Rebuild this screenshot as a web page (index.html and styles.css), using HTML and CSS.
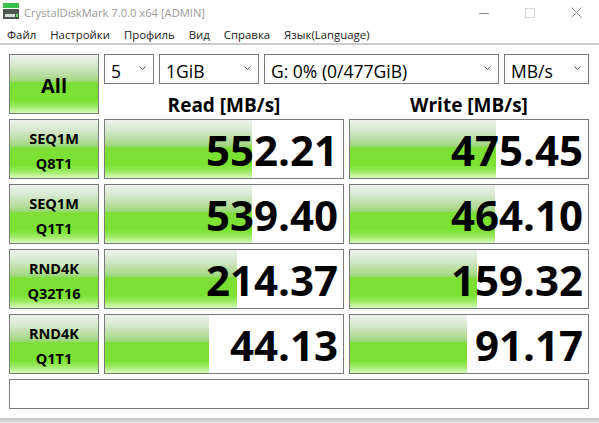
FILE: index.html
```html
<!DOCTYPE html>
<html lang="ru">
<head>
<meta charset="utf-8">
<title>CrystalDiskMark 7.0.0 x64 [ADMIN]</title>
<link rel="stylesheet" href="styles.css">
</head>
<body>
<div class="window">
  <div class="titlebar">
    <svg class="app-icon" width="17" height="17" viewBox="0 0 17 17">
      <rect x="0" y="0" width="16" height="5" fill="#38c24a"/>
      <rect x="0" y="6" width="16" height="10" fill="#4e5650"/>
      <rect x="2" y="11" width="10" height="3" fill="#d9dcd9"/>
      <rect x="13" y="11" width="2" height="3" fill="#6bd46f"/>
    </svg>
    <span class="title">CrystalDiskMark 7.0.0 x64 [ADMIN]</span>
    <div class="controls">
      <span class="ctl"><svg width="10" height="10" viewBox="0 0 10 10"><line x1="0" y1="5.5" x2="10" y2="5.5" stroke="#8a8a8a" stroke-width="1"/></svg></span>
      <span class="ctl"><svg width="10" height="10" viewBox="0 0 10 10"><rect x="0.5" y="0.5" width="9" height="9" fill="none" stroke="#d6d6d6" stroke-width="1"/></svg></span>
      <span class="ctl"><svg width="11" height="11" viewBox="0 0 11 11"><path d="M0.5 0.5 L10.5 10.5 M10.5 0.5 L0.5 10.5" stroke="#8a8a8a" stroke-width="1"/></svg></span>
    </div>
  </div>
  <nav class="menubar">
    <span class="menu-item">Файл</span>
    <span class="menu-item">Настройки</span>
    <span class="menu-item">Профиль</span>
    <span class="menu-item">Вид</span>
    <span class="menu-item">Справка</span>
    <span class="menu-item">Язык(Language)</span>
  </nav>
  <main class="board">
    <div class="btn-all">All</div>
    <div class="top">
      <div class="selects">
        <div class="select s-count"><span>5</span><svg class="chev" width="7" height="4" viewBox="0 0 7 4"><path d="M0.5 0.5 L3.5 3.5 L6.5 0.5" fill="none" stroke="#555" stroke-width="1"/></svg></div>
        <div class="select s-size"><span>1GiB</span><svg class="chev" width="7" height="4" viewBox="0 0 7 4"><path d="M0.5 0.5 L3.5 3.5 L6.5 0.5" fill="none" stroke="#555" stroke-width="1"/></svg></div>
        <div class="select s-drive"><span>G: 0% (0/477GiB)</span><svg class="chev" width="7" height="4" viewBox="0 0 7 4"><path d="M0.5 0.5 L3.5 3.5 L6.5 0.5" fill="none" stroke="#555" stroke-width="1"/></svg></div>
        <div class="select s-unit"><span>MB/s</span><svg class="chev" width="7" height="4" viewBox="0 0 7 4"><path d="M0.5 0.5 L3.5 3.5 L6.5 0.5" fill="none" stroke="#555" stroke-width="1"/></svg></div>
      </div>
      <div class="headers">
        <div class="head">Read [MB/s]</div>
        <div class="head">Write [MB/s]</div>
      </div>
    </div>

    <div class="label"><span>SEQ1M</span><span>Q8T1</span></div>
    <div class="value" style="--fill:147px">552.21</div>
    <div class="value" style="--fill:146px">475.45</div>

    <div class="label"><span>SEQ1M</span><span>Q1T1</span></div>
    <div class="value" style="--fill:147px">539.40</div>
    <div class="value" style="--fill:145px">464.10</div>

    <div class="label"><span>RND4K</span><span>Q32T16</span></div>
    <div class="value" style="--fill:132px">214.37</div>
    <div class="value" style="--fill:127px">159.32</div>

    <div class="label"><span>RND4K</span><span>Q1T1</span></div>
    <div class="value" style="--fill:104px">44.13</div>
    <div class="value" style="--fill:117px">91.17</div>

    <div class="comment"></div>
  </main>
  <div class="bottom-edge"></div>
</div>
</body>
</html>
```

FILE: styles.css
```css
* { box-sizing: border-box; }

html, body {
  margin: 0;
  padding: 0;
  background: #ffffff;
}

body {
  width: 599px;
  height: 423px;
  overflow: hidden;
  font-family: "Open Sans", "Noto Sans", sans-serif;
  color: #000;
}

:root {
  --green: linear-gradient(to bottom,
    #eef2ee 0%,
    #d6e8cd 18%,
    #b4dc9a 36%,
    #9cd77a 45%,
    #7ddf36 48%,
    #7ae232 78%,
    #98ea5e 88%,
    #c9f6a6 97%,
    #d6f9bd 100%);
}

.window {
  width: 599px;
  height: 423px;
  display: flex;
  flex-direction: column;
}

/* title bar */
.titlebar {
  height: 25px;
  display: flex;
  align-items: center;
}

.app-icon {
  margin-left: 3px;
  margin-top: -2px;
  flex: none;
}

.title {
  margin-left: 4px;
  font-size: 11.2px;
  color: #9a9a9a;
  white-space: nowrap;
}

.controls {
  margin-left: auto;
  display: flex;
  height: 25px;
}

.ctl {
  width: 46px;
  height: 25px;
  display: flex;
  align-items: center;
  justify-content: center;
}

/* menu */
.menubar {
  height: 21px;
  display: flex;
  align-items: center;
  border-bottom: 2px solid #cbcbcb;
  font-size: 11.4px;
  color: #1a1a1a;
  padding-top: 1px;
}

.menu-item {
  padding: 0 7px;
  white-space: nowrap;
}

/* main board */
.board {
  display: grid;
  grid-template-columns: 90px 240px 240px;
  grid-template-rows: 60px repeat(4, 60px) 30px;
  column-gap: 5px;
  row-gap: 5px;
  padding: 9px 0 0 9px;
}

.btn-all {
  border: 1px solid #7a7a7a;
  background: var(--green);
  display: flex;
  align-items: center;
  justify-content: center;
  font-weight: 700;
  font-size: 20px;
  padding-top: 2px;
}

.top {
  grid-column: 2 / 4;
  display: flex;
  flex-direction: column;
}

.selects {
  display: flex;
  gap: 5px;
  height: 31px;
}

.select {
  border: 1px solid #7a7a7a;
  background: #fff;
  display: flex;
  align-items: center;
  padding: 4px 0 0 6px;
  font-size: 17.5px;
  white-space: nowrap;
}

.select .chev {
  margin-left: auto;
  margin-right: 7px;
  margin-top: -6px;
  flex: none;
}

.s-count { width: 50px; }
.s-size { width: 100px; }
.s-drive { width: 235px; }
.s-unit { width: 85px; }

.headers {
  display: grid;
  grid-template-columns: 240px 240px;
  column-gap: 5px;
  padding-top: 8px;
}

.head {
  text-align: center;
  font-weight: 700;
  font-size: 19px;
  line-height: 26px;
}

.label {
  border: 1px solid #7a7a7a;
  background: var(--green);
  display: flex;
  flex-direction: column;
  align-items: center;
  justify-content: center;
  font-weight: 700;
  font-size: 14.5px;
  line-height: 25px;
  padding-top: 4px;
}

.value {
  border: 1px solid #7a7a7a;
  background-color: #fff;
  background-image: var(--green);
  background-repeat: no-repeat;
  background-size: var(--fill) 100%;
  display: flex;
  align-items: center;
  justify-content: flex-end;
  padding-right: 5px;
  padding-top: 1px;
  font-weight: 700;
  font-size: 42px;
  line-height: 42px;
}

.comment {
  grid-column: 1 / 4;
  border: 1px solid #7a7a7a;
  background: #fff;
}

.bottom-edge {
  margin-top: 9px;
  height: 5px;
  background: linear-gradient(to bottom, #c4c4c4, #e4e4e4);
}
```
